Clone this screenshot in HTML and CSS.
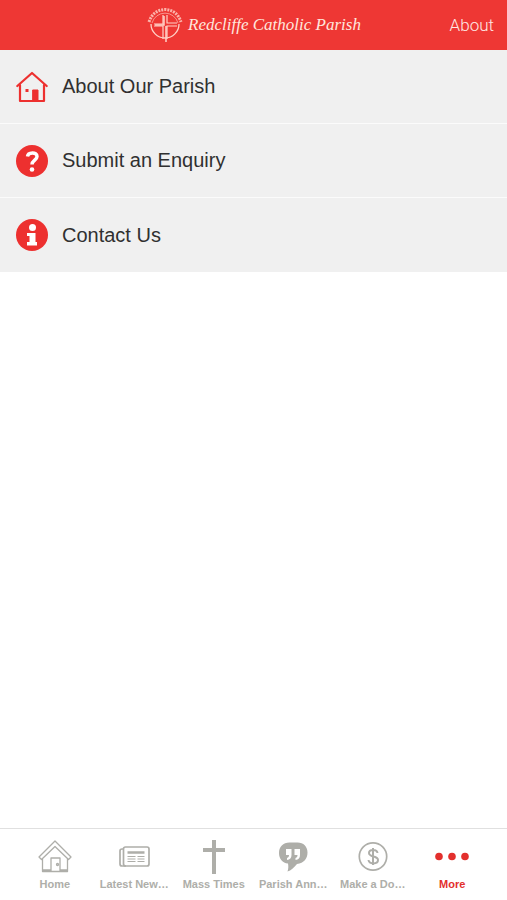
FILE: index.html
```html
<!DOCTYPE html>
<html lang="en">
<head>
  <meta charset="UTF-8">
  <meta name="viewport" content="width=device-width, initial-scale=1">
  <title>Redcliffe Catholic Parish</title>
  <link rel="stylesheet" href="styles.css">
</head>
<body>
  <header>
    <div class="brand">
      <svg class="brand-logo" width="38" height="38" viewBox="0 0 38 38" fill="none" stroke="currentColor">
        <path d="M5 18A14 14 0 0 0 33 18" stroke-width="1.300"/>
        <path d="M6 17A13.500 13.500 0 0 1 32 17" stroke-width="1" opacity=".6"/>
        <path d="M3 16Q7 4 19 3.500Q31 4 35 16" stroke-width="3" stroke-dasharray="2 1" opacity=".8"/>
        <path d="M17 9v9H8M21 9v8h10M17 33V20H8M21 33V20h10" stroke-width="1.200"/>
        <path d="M18 10v9h-9M20 20v16" stroke-width="1.500"/>
      </svg>
      <span class="brand-name">Redcliffe Catholic Parish</span>
    </div>
    <a href="#" class="about">About</a>
  </header>

  <main>
    <a href="#" class="item">
      <svg width="32" height="32" viewBox="0 0 32 32" fill="none" stroke="currentColor" stroke-width="2.200" stroke-linejoin="round" stroke-linecap="round">
        <path d="M1.300 15L16 2l14.700 13M4 14v16h24V14"/>
        <path d="M17 19h5v11h-5z" fill="currentColor" stroke-width="1"/>
        <path d="M9.500 19.500h3" stroke-width="3" stroke-linecap="butt"/>
      </svg>
      <span>About Our Parish</span>
    </a>
    <a href="#" class="item">
      <svg width="32" height="32" viewBox="0 0 32 32">
        <circle cx="16" cy="16" r="16" fill="currentColor"/>
        <path d="M11.500 11.500C12 7 21 6.500 21 11.500c0 3.500-5 3.700-5 8" fill="none" stroke="#fff" stroke-width="3.500"/>
        <circle cx="16" cy="24.500" r="2.300" fill="#fff"/>
      </svg>
      <span>Submit an Enquiry</span>
    </a>
    <a href="#" class="item">
      <svg width="32" height="32" viewBox="0 0 32 32">
        <circle cx="16" cy="16" r="16" fill="currentColor"/>
        <circle cx="16.500" cy="8.500" r="3.500" fill="#fff"/>
        <path d="M11 14h8.500v9H21v3.500H11V23h2.500v-6H11z" fill="#fff"/>
      </svg>
      <span>Contact Us</span>
    </a>
  </main>

  <nav>
    <a href="#">
      <svg width="36" height="36" viewBox="0 0 36 36" fill="none" stroke="currentColor" stroke-width="1.300" stroke-linejoin="round">
        <path d="M18 2L2 18l2.500 2.500L18 7.500l13.500 13L34 18z"/>
        <path d="M5.500 20v12.500h25V20M14 32.500V19h9v13.500M5.500 31H14M23 31h7.500"/>
        <circle cx="20.500" cy="25.500" r="1"/>
      </svg>
      <span>Home</span>
    </a>
    <a href="#">
      <svg width="36" height="36" viewBox="0 0 36 36" fill="none" stroke="currentColor">
        <rect x="7.500" y="8" width="25.500" height="19" rx="2" stroke-width="1.700"/>
        <path d="M7.500 10H6a2 2 0 0 0-2 2v13a2 2 0 0 0 2 2h4" stroke-width="1.700"/>
        <path d="M11.500 13.500h17" stroke-width="2.500"/>
        <path d="M11.500 17.500h8M11.500 20h8M11.500 22.500h8M21.500 17.500h7M21.500 20h7M21.500 22.500h7" stroke-width="1"/>
      </svg>
      <span>Latest New…</span>
    </a>
    <a href="#">
      <svg width="36" height="36" viewBox="0 0 36 36" fill="currentColor">
        <path d="M16 1h4v8h9v4h-9v22h-4V13H7V9h9z"/>
      </svg>
      <span>Mass Times</span>
    </a>
    <a href="#">
      <svg width="36" height="36" viewBox="0 0 36 36" fill="currentColor">
        <path d="M14.500 3.500h8c6 0 10 4 10 10S29 24 22 25c-3 3.500-6 6.500-9.500 7.500 1-3 1-5 .5-8-5.500-.5-9-4.500-9-10.500s4-10.500 10.500-10.500z"/>
        <path d="M11 10h5.500v6c0 3-1.500 4.500-4.500 5v-2c1.500-.5 2-1.500 2-3h-3zM19.500 10H25v6c0 3-1.500 4.500-4.500 5v-2c1.500-.5 2-1.500 2-3h-3z" fill="#fff"/>
      </svg>
      <span>Parish Ann…</span>
    </a>
    <a href="#">
      <svg width="36" height="36" viewBox="0 0 36 36" fill="none" stroke="currentColor">
        <circle cx="18" cy="17.500" r="13.700" stroke-width="1.700"/>
        <path d="M22.500 14c-.5-4-8.500-4-8.500 0 0 4.500 9 2.500 9 7 0 4.500-9 4.500-9.500 0M18 9v17" stroke-width="2"/>
      </svg>
      <span>Make a Do…</span>
    </a>
    <a href="#" class="active">
      <svg width="36" height="36" viewBox="0 0 36 36" fill="currentColor">
        <circle cx="5" cy="17.500" r="3.800"/>
        <circle cx="18" cy="17.500" r="3.800"/>
        <circle cx="31" cy="17.500" r="3.800"/>
      </svg>
      <span>More</span>
    </a>
  </nav>
</body>
</html>
```
FILE: styles.css
```css
body {
  margin: 0;
  min-height: 100vh;
  display: flex;
  flex-direction: column;
  background-color: #fff;
  font-family: "Liberation Sans", Arial, sans-serif;
}

a {
  text-decoration: none;
}

svg {
  display: block;
  flex-shrink: 0;
}

header {
  display: grid;
  grid-template-columns: 1fr auto 1fr;
  align-items: center;
  height: 50px;
  padding: 0 13px;
  background-color: #ee3734;
  color: #fff;
}

.brand {
  grid-column: 2;
  display: flex;
  align-items: center;
  gap: 4px;
}

.brand-logo {
  color: #ffd2c8;
}

.brand-name {
  color: #ffe6dd;
  font-family: "Liberation Serif", "Times New Roman", serif;
  font-size: 17px;
  font-style: italic;
  white-space: nowrap;
}

.about {
  justify-self: end;
  color: #ffe8e4;
  font-family: Roboto, sans-serif;
  font-size: 17px;
  font-weight: 300;
}

main {
  flex: 1;
}

.item {
  display: flex;
  align-items: center;
  gap: 14px;
  box-sizing: border-box;
  height: 74px;
  padding: 0 16px;
  background-color: #f0f0f0;
  color: #ed302f;
}

.item:not(:last-child) {
  border-bottom: 1px solid #fbfbfb;
}

.item span {
  color: #303030;
  font-size: 20px;
}

nav {
  display: flex;
  padding: 10px 15px 9px;
  border-top: 1px solid #e0e0e0;
}

nav a {
  flex: 1 1 0;
  display: flex;
  flex-direction: column;
  align-items: center;
  gap: 2px;
  color: #aeaea9;
  font-size: 11px;
  font-weight: bold;
  line-height: 14px;
  white-space: nowrap;
}

nav .active {
  color: #e3302d;
}
```
